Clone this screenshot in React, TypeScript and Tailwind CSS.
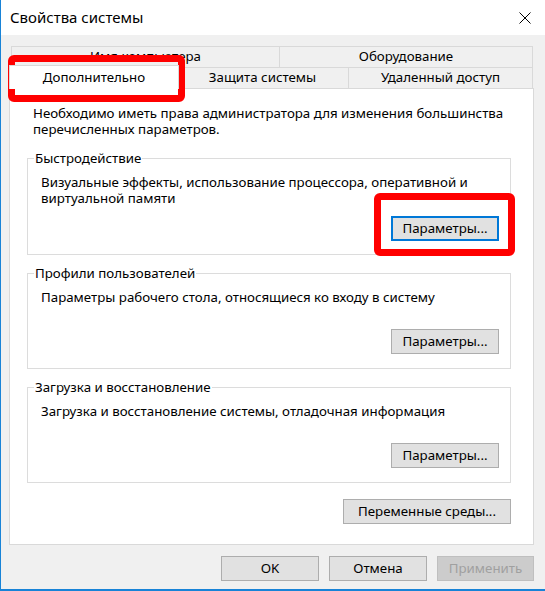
// Win10 "Свойства системы" dialog, tab "Дополнительно", with two red
// highlight frames drawn over it (as in a how-to screenshot).

const font = "font-['Segoe_UI','Noto_Sans','Liberation_Sans',sans-serif]";

function Button({
  label,
  className = "",
  focused = false,
  disabled = false,
}: {
  label: string;
  className?: string;
  focused?: boolean;
  disabled?: boolean;
}) {
  return (
    <div
      className={`flex h-[25px] items-center justify-center text-[13.3px] leading-none ${
        disabled
          ? "border border-[#bfbfbf] bg-[#cccccc] text-[#a0a0a0]"
          : focused
          ? "border-2 border-[#0078d7] bg-[#e1e1e1] text-black"
          : "border border-[#adadad] bg-[#e1e1e1] text-black"
      } ${className}`}
    >
      {label}
    </div>
  );
}

function Group({
  title,
  children,
  className = "",
}: {
  title: string;
  children: React.ReactNode;
  className?: string;
}) {
  return (
    <fieldset className={`ml-[17px] w-[484px] border border-[#dcdcdc] ${className}`}>
      <legend className="ml-[6px] px-[1px] text-[13.3px] leading-[16px]">{title}</legend>
      {children}
    </fieldset>
  );
}

function CloseGlyph() {
  return (
    <svg width="12" height="12" viewBox="0 0 12 12" fill="none">
      <path d="M0.5 0.5l11 11M11.5 0.5l-11 11" stroke="#000" strokeWidth="1" />
    </svg>
  );
}

export default function App() {
  return (
    <div
      className={`relative h-[591px] w-[545px] overflow-hidden border-b-2 border-l border-[#1883d7] bg-[#f0f0f0] text-black ${font}`}
    >
      {/* title bar */}
      <div className="flex h-[35px] items-center justify-between bg-white pl-[9px] pr-[14px]">
        <span className="text-[15px] leading-none">Свойства системы</span>
        <CloseGlyph />
      </div>

      <div className="pl-[8px] pt-[11px]">
        {/* tabs */}
        <div className="ml-[2px] flex h-[22px] w-[522px] text-[13.3px]">
          <div className="flex w-[269px] items-center justify-center border border-[#d9d9d9]">
            Имя компьютера
          </div>
          <div className="-ml-px flex flex-1 items-center justify-center border border-[#d9d9d9]">
            Оборудование
          </div>
        </div>
        <div className="-mt-px ml-[2px] flex h-[22px] w-[522px] text-[13.3px]">
          <div className="relative z-10 -mx-[2px] -mt-[2px] flex h-[24px] w-[170px] items-center justify-center border border-b-0 border-[#d9d9d9] bg-white">
            Дополнительно
          </div>
          <div className="-ml-px flex w-[173px] items-center justify-center border border-[#d9d9d9]">
            Защита системы
          </div>
          <div className="-ml-px flex flex-1 items-center justify-center border border-[#d9d9d9]">
            Удаленный доступ
          </div>
        </div>

        {/* page */}
        <div className="-mt-px h-[457px] w-[525px] border border-[#d9d9d9] bg-white pt-[16px] text-[13.3px] leading-[16px]">
          <p className="pl-[23px]">
            Необходимо иметь права администратора для изменения большинства
            <br />
            перечисленных параметров.
          </p>

          <Group title="Быстродействие" className="mt-[13px]">
            <p className="pl-[13px] pt-[8px]">
              Визуальные эффекты, использование процессора, оперативной и
              <br />
              виртуальной памяти
            </p>
            <div className="flex justify-end pb-[13px] pr-[11px] pt-[10px]">
              <Button label="Параметры..." className="w-[108px]" focused />
            </div>
          </Group>

          <Group title="Профили пользователей" className="mt-[10px]">
            <p className="pl-[13px] pt-[8px]">
              Параметры рабочего стола, относящиеся ко входу в систему
            </p>
            <div className="flex justify-end pb-[14px] pr-[11px] pt-[24px]">
              <Button label="Параметры..." className="w-[108px]" />
            </div>
          </Group>

          <Group title="Загрузка и восстановление" className="mt-[10px]">
            <p className="pl-[13px] pt-[8px]">
              Загрузка и восстановление системы, отладочная информация
            </p>
            <div className="flex justify-end pb-[14px] pr-[11px] pt-[24px]">
              <Button label="Параметры..." className="w-[108px]" />
            </div>
          </Group>

          <div className="ml-[17px] mt-[16px] flex w-[484px] justify-end">
            <Button label="Переменные среды..." className="w-[168px]" />
          </div>
        </div>

        {/* dialog buttons */}
        <div className="mt-[11px] flex w-[525px] justify-end gap-[10px]">
          <Button label="OK" className="w-[98px]" />
          <Button label="Отмена" className="w-[98px]" />
          <Button label="Применить" className="w-[97px]" disabled />
        </div>
      </div>

      {/* red highlight frames */}
      <div className="absolute left-[7px] top-[55px] h-[47px] w-[177px] rounded-[6px] border-[7px] border-[#ff0000]" />
      <div className="absolute left-[373px] top-[193px] h-[63px] w-[141px] rounded-[6px] border-[7px] border-[#ff0000]" />
    </div>
  );
}
